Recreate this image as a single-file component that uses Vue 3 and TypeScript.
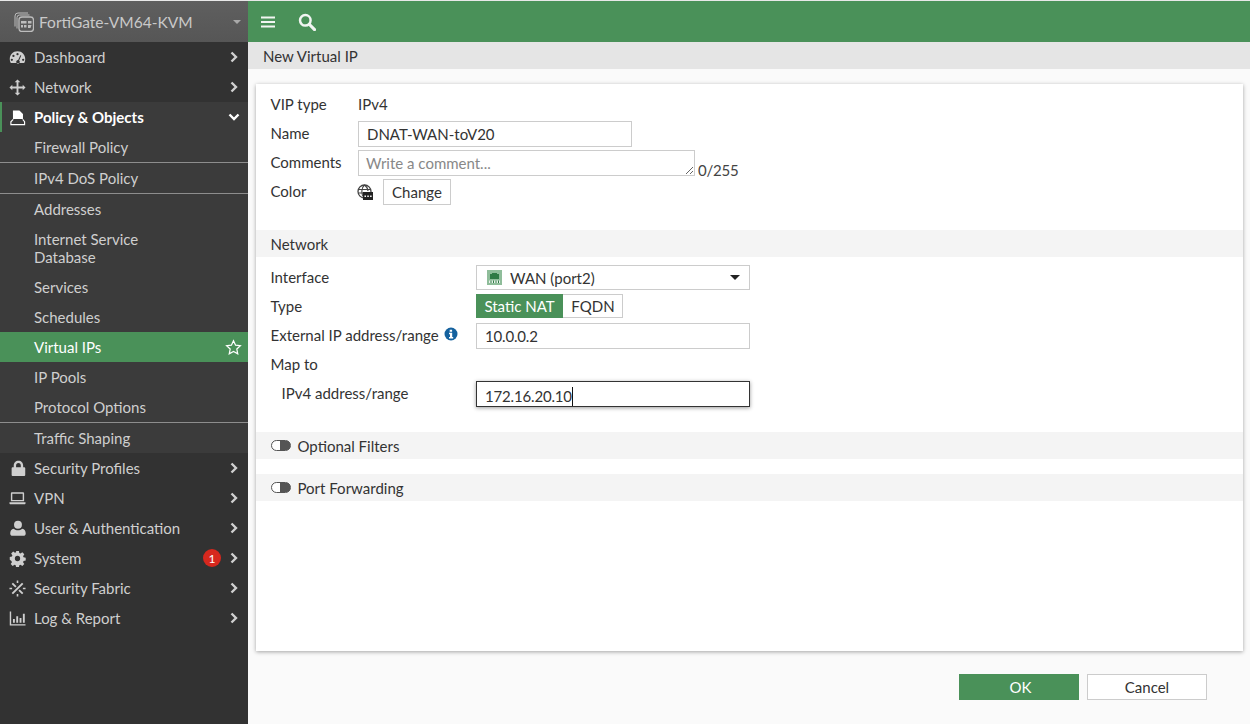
<script setup lang="ts">
interface MenuItem {
  label: string
  icon?: string
  kind: 'top' | 'sub'
  open?: boolean
  current?: boolean
  rule?: boolean
  badge?: number
  lines?: string[]
}

const menu: MenuItem[] = [
  { label: 'Dashboard', icon: 'gauge', kind: 'top' },
  { label: 'Network', icon: 'move', kind: 'top' },
  { label: 'Policy & Objects', icon: 'policy', kind: 'top', open: true },
  { label: 'Firewall Policy', kind: 'sub', rule: true },
  { label: 'IPv4 DoS Policy', kind: 'sub', rule: true },
  { label: 'Addresses', kind: 'sub' },
  { label: 'Internet Service Database', kind: 'sub', lines: ['Internet Service', 'Database'] },
  { label: 'Services', kind: 'sub' },
  { label: 'Schedules', kind: 'sub' },
  { label: 'Virtual IPs', kind: 'sub', current: true },
  { label: 'IP Pools', kind: 'sub' },
  { label: 'Protocol Options', kind: 'sub', rule: true },
  { label: 'Traffic Shaping', kind: 'sub' },
  { label: 'Security Profiles', icon: 'lock', kind: 'top' },
  { label: 'VPN', icon: 'laptop', kind: 'top' },
  { label: 'User & Authentication', icon: 'user', kind: 'top' },
  { label: 'System', icon: 'cog', kind: 'top', badge: 1 },
  { label: 'Security Fabric', icon: 'fabric', kind: 'top' },
  { label: 'Log & Report', icon: 'chart', kind: 'top' }
]
</script>

<template>
  <div class="page">
    <aside class="sidebar">
      <div class="device">
        <svg class="device-icon" viewBox="0 0 20 20" fill="none" stroke="#bdbdbd">
          <path d="M1 14.500V4a3 3 0 0 1 3-3h10" stroke-width="1" />
          <path d="M3 16.500V5.500a2.500 2.500 0 0 1 2.500-2.500h10" stroke-width="1" />
          <rect x="5" y="5" width="14.500" height="14.500" rx="3" stroke-width="1.300" />
          <path d="M7 9h5.500v2.500H7zM7 13h2v2.500H7zM10 13h2.500v2.500H10zM14 9h3.500v2.500H14zM14 13h3.500l-1 3H14z" fill="#bdbdbd" stroke="none" />
        </svg>
        <span class="device-name">FortiGate-VM64-KVM</span>
        <span class="device-caret"></span>
      </div>
      <nav>
        <template v-for="item in menu" :key="item.label">
          <div
            class="item"
            :class="[item.kind, { open: item.open, current: item.current, tall: item.lines }]"
          >
            <span v-if="item.kind === 'top'" class="item-icon">
              <svg v-if="item.icon === 'gauge'" viewBox="0 0 18 18" fill="#cfcfcf">
                <path fill-rule="evenodd" d="M9 2.500C4.300 2.500.8 6.200.8 10.800c0 1.500.4 2.800 1.100 4h14.200c.7-1.200 1.100-2.500 1.100-4C17.200 6.200 13.700 2.500 9 2.500zM9 4.300a1.200 1.200 0 1 1 0 2.400 1.200 1.200 0 0 1 0-2.400zM4.700 6.100a1.200 1.200 0 1 1 0 2.400 1.200 1.200 0 0 1 0-2.400zM3 10.200a1.200 1.200 0 1 1 0 2.400 1.200 1.200 0 0 1 0-2.400zM15 10.200a1.200 1.200 0 1 1 0 2.400 1.200 1.200 0 0 1 0-2.400zM12 6.500l1 .4-2.300 5.200a1.900 1.900 0 1 1-1-.4z" />
              </svg>
              <svg v-else-if="item.icon === 'move'" viewBox="0 0 18 18" fill="#cfcfcf">
                <path d="M9 .5l3 3h-2v4.500h4.500v-2l3 3-3 3v-2H10v4.500h2l-3 3-3-3h2V10H3.500v2l-3-3 3-3v2H8V3.500H6z" />
              </svg>
              <svg v-else-if="item.icon === 'policy'" viewBox="0 0 18 18">
                <path d="M4.200 1.500h6.800l3.800 3.800v5.200H4.200z" fill="#fff" />
                <path d="M4.500 11L2 13.500v3h14.500v-3L14.500 11" fill="none" stroke="#fff" stroke-width="1.200" />
              </svg>
              <svg v-else-if="item.icon === 'lock'" viewBox="0 0 18 18" fill="#cfcfcf">
                <path fill-rule="evenodd" d="M10 .8C7 .8 5 3 5 6v1.800H3.800c-.6 0-1 .4-1 1V16c0 .6.4 1 1 1h12.400c.6 0 1-.4 1-1V8.800c0-.6-.4-1-1-1H15V6c0-3-2-5.200-5-5.200zM10 3.200c1.600 0 2.500 1.200 2.500 2.800v1.800h-5V6c0-1.600.9-2.800 2.500-2.800z" />
              </svg>
              <svg v-else-if="item.icon === 'laptop'" viewBox="0 0 18 18" fill="#cfcfcf">
                <path fill-rule="evenodd" d="M3 2.500h12c.6 0 1 .4 1 1V12H2V3.500c0-.6.4-1 1-1zM3.500 4v6.500h11V4zM.5 13h17v1c0 .6-.5 1-1 1h-15c-.5 0-1-.4-1-1z" />
              </svg>
              <svg v-else-if="item.icon === 'user'" viewBox="0 0 18 18" fill="#cfcfcf">
                <circle cx="9.500" cy="5" r="4.200" />
                <path d="M5 9.200c1.500 1.200 2.900 1.600 4.500 1.600s3-.4 4.500-1.600c2.500.3 3.700 2.300 3.700 5 0 1.700-1 2.600-2.500 2.600H3.800c-1.500 0-2.500-.9-2.500-2.600 0-2.700 1.200-4.700 3.700-5z" />
              </svg>
              <svg v-else-if="item.icon === 'cog'" viewBox="0 0 18 18" fill="#cfcfcf">
                <path fill-rule="evenodd" d="M7.500 1h3l.4 2.300 1.300.5 1.900-1.300 2.100 2.100-1.300 1.900.5 1.300 2.300.4v3l-2.300.4-.5 1.300 1.300 1.900-2.100 2.100-1.900-1.300-1.300.5-.4 2.300h-3l-.4-2.300-1.300-.5-1.900 1.300-2.100-2.100 1.300-1.900-.5-1.300L.8 10.400v-3l2.300-.4.5-1.300-1.300-1.900 2.100-2.100 1.900 1.300 1.300-.5zM9 6.200a2.800 2.800 0 1 0 0 5.600 2.800 2.800 0 0 0 0-5.600z" />
              </svg>
              <svg v-else-if="item.icon === 'fabric'" viewBox="0 0 18 18" fill="none" stroke="#cfcfcf" stroke-width="2">
                <path d="M3.500 3.500l3.800 3.800M10.700 10.700l3.800 3.800M14.500 3.500l-11 11" />
                <path d="M9 .5v2.800M9 14.700v2.800M.5 9h2.800M14.700 9h2.800" stroke-width="1.700" />
              </svg>
              <svg v-else viewBox="0 0 18 18" fill="#cfcfcf">
                <path d="M.8 1.500h1.500V15h15.200v1.500H.8zM4.200 9.500h2V13.500h-2zM7.700 6.500h2V13.500h-2zM11.200 8.500h2V13.500h-2zM14.700 4h2V13.500h-2z" />
              </svg>
            </span>
            <span class="item-label">
              <template v-if="item.lines">
                <span v-for="line in item.lines" :key="line" class="item-line">{{ line }}</span>
              </template>
              <template v-else>{{ item.label }}</template>
            </span>
            <span v-if="item.badge" class="badge">{{ item.badge }}</span>
            <svg v-if="item.kind === 'top' && !item.open" class="chevron" viewBox="0 0 10 12" fill="none" stroke="#d0d0d0" stroke-width="2.400">
              <path d="M2.500 1.500L7 6l-4.500 4.500" />
            </svg>
            <svg v-if="item.open" class="chevron-down" viewBox="0 0 12 10" fill="none" stroke="#fff" stroke-width="2.400">
              <path d="M1.500 2.500L6 7l4.500-4.500" />
            </svg>
            <svg v-if="item.current" class="star" viewBox="0 0 18 18" fill="none" stroke="#fff" stroke-width="1.300">
              <path d="M9 1.800l2.200 4.700 5.100.6-3.800 3.500 1 5.100L9 13.200l-4.500 2.500 1-5.100L1.700 7.100l5.100-.6z" />
            </svg>
          </div>
          <div v-if="item.rule" class="rule"></div>
        </template>
      </nav>
    </aside>

    <main class="main">
      <header class="topbar">
        <svg class="top-icon" viewBox="0 0 16 16" fill="#f1f5f2">
          <path d="M1 2.500h14v2H1zM1 7h14v2H1zM1 11.500h14v2H1z" />
        </svg>
        <svg class="top-icon search" viewBox="0 0 16 16" fill="none" stroke="#f1f5f2">
          <circle cx="6.500" cy="6.500" r="4.700" stroke-width="2.200" />
          <path d="M10 10l4.700 4.700" stroke-width="2.800" stroke-linecap="round" />
        </svg>
      </header>
      <div class="title">New Virtual IP</div>

      <div class="content">
        <section class="card">
          <div class="form top-form">
            <div class="row vip">
              <label>VIP type</label>
              <span>IPv4</span>
            </div>
            <div class="row name">
              <label>Name</label>
              <input class="field" type="text" value="DNAT-WAN-toV20" readonly />
            </div>
            <div class="row comments">
              <label>Comments</label>
              <textarea class="field area" placeholder="Write a comment..." readonly></textarea>
              <span class="count">0/255</span>
            </div>
            <div class="row color">
              <label>Color</label>
              <svg class="color-icon" viewBox="0 0 16 16">
                <circle cx="7.500" cy="7.500" r="6.500" fill="#fff" stroke="#444" stroke-width="1.300" />
                <path d="M1.500 5.500h12M1.500 9h5M7.500 1C4 4 4 10 7 14M7.500 1C10 3 11 5 11 7" fill="none" stroke="#444" stroke-width="1.100" />
                <rect x="6" y="8" width="10" height="8" fill="#222" />
                <path d="M7.500 11.500h1.500V13H7.500zM10.300 11.500h1.500V13h-1.500zM13.100 11.500h1.500V13h-1.500z" fill="#fff" />
              </svg>
              <button class="change" type="button">Change</button>
            </div>
          </div>

          <div class="band network">Network</div>

          <div class="form net-form">
            <div class="row iface">
              <label>Interface</label>
              <div class="select">
                <svg class="port" viewBox="0 0 15 15">
                  <rect width="15" height="15" fill="#8fbd9a" />
                  <path d="M3 4h2V3h5v1h2v5H3z" fill="#2f7a45" />
                  <path d="M2 10.500h11V13H2z" fill="#e8f2ea" />
                  <path d="M3.500 10.500h1V13h-1zM6 10.500h1V13H6zM8.500 10.500h1V13h-1zM11 10.500h1V13h-1z" fill="#2f7a45" />
                </svg>
                <span class="select-text">WAN (port2)</span>
                <span class="select-caret"></span>
              </div>
            </div>
            <div class="row type">
              <label>Type</label>
              <div class="toggle">
                <span class="toggle-on">Static NAT</span>
                <span class="toggle-off">FQDN</span>
              </div>
            </div>
            <div class="row external">
              <label class="with-info">External IP address/range
                <svg class="info" viewBox="0 0 14 14">
                  <circle cx="7" cy="7" r="6.500" fill="#14619e" />
                  <path d="M5.700 2.700h2.400v2H5.700zM5 5.700h3.200v4.200h1v1.500H5V9.900h1V7.200H5z" fill="#fff" />
                </svg>
              </label>
              <input class="field wide digits" type="text" value="10.0.0.2" readonly />
            </div>
            <div class="row map">
              <label>Map to</label>
            </div>
            <div class="row ipv4">
              <label>IPv4 address/range</label>
              <div class="field wide focused digits"><span class="caret-text">172.16.20.10</span></div>
            </div>
          </div>

          <div class="band switch-band filters">
            <span class="switch"></span>Optional Filters
          </div>
          <div class="band switch-band forwarding">
            <span class="switch"></span>Port Forwarding
          </div>
        </section>

        <footer class="actions">
          <button class="btn ok" type="button">OK</button>
          <button class="btn cancel" type="button">Cancel</button>
        </footer>
      </div>
    </main>
  </div>
</template>

<style>
html,
body {
  margin: 0;
  padding: 0;
  overflow: hidden;
}
</style>

<style scoped>
* {
  box-sizing: border-box;
}

.page {
  display: flex;
  width: 1250px;
  height: 724px;
  font-family: Lato, "Liberation Sans", sans-serif;
  font-size: 15px;
  color: #333;
  background: #fafafa;
  overflow: hidden;
}

.sidebar {
  width: 248px;
  flex: none;
  background: #323232;
  color: #cfcfcf;
}

.device {
  display: flex;
  align-items: center;
  height: 42px;
  padding: 0 7px 0 14px;
  border-top: 1px solid #e8e8e8;
  background: linear-gradient(#5f5f5f, #565656);
}

.device-icon {
  width: 20px;
  height: 20px;
  margin-right: 5px;
}

.device-name {
  flex: 1;
  font-size: 15.500px;
  color: #c9c9c9;
}

.device-caret {
  width: 0;
  height: 0;
  border: 4px solid transparent;
  border-top: 4px solid #a9a9a9;
  border-bottom: 0;
}

.item {
  display: flex;
  align-items: center;
  min-height: 30px;
  padding-right: 9px;
}

.item.sub {
  padding-left: 34px;
  background: #3b3b3b;
}

.item.tall {
  min-height: 48px;
}

.item.top {
  padding-left: 9px;
}

.item.open {
  background: #3b3b3b;
  border-left: 2px solid #4a9159;
  padding-left: 7px;
  color: #fff;
  font-weight: 700;
}

.item.current {
  background: #4a9159;
  color: #fff;
  padding-right: 6px;
}

.item-icon {
  display: flex;
  width: 17px;
  margin-right: 8px;
}

.item-icon svg {
  width: 17px;
  height: 17px;
}

.item-label {
  flex: 1;
  line-height: 18px;
}

.item-line {
  display: block;
}

.badge {
  display: flex;
  align-items: center;
  justify-content: center;
  width: 18px;
  height: 18px;
  margin-right: 8px;
  border-radius: 50%;
  background: #d6281e;
  color: #fff;
  font-size: 12px;
}

.chevron {
  width: 10px;
  height: 12px;
}

.chevron-down {
  width: 12px;
  height: 10px;
  margin-right: -1px;
}

.star {
  width: 17px;
  height: 17px;
}

.rule {
  height: 1px;
  background: #8d8d8d;
}

.main {
  flex: 1;
  display: flex;
  flex-direction: column;
  min-width: 0;
}

.topbar {
  display: flex;
  align-items: center;
  gap: 22px;
  height: 42px;
  padding-left: 12px;
  border-top: 1px solid #e8e8e8;
  background: #4a9159;
}

.top-icon {
  width: 16px;
  height: 16px;
}

.search {
  width: 18px;
  height: 18px;
}

.title {
  height: 27px;
  padding: 1px 0 0 15px;
  line-height: 27px;
  background: #e5e5e5;
  color: #333;
}

.content {
  flex: 1;
  padding: 15px 7px 0 8px;
}

.card {
  height: 567px;
  padding-top: 9px;
  background: #fff;
  box-shadow: 0 1px 4px rgba(0, 0, 0, 0.35);
}

.form {
  padding-left: 15px;
}

.row {
  display: flex;
  align-items: center;
}

.row label {
  flex: none;
  margin: -2px 0 0 -0.5px;
}

.top-form label {
  width: 87.500px;
}

.net-form label {
  width: 205.500px;
}

.vip {
  height: 22px;
}

.vip label {
  margin-top: 0;
}

.name {
  height: 26px;
  margin-top: 6px;
}

.comments {
  height: 26px;
  margin-top: 3px;
}

.color {
  height: 26px;
  margin-top: 3px;
}

.field {
  display: block;
  height: 26px;
  padding: 0 8px;
  border: 1px solid #ccc;
  border-radius: 0;
  background: #fff;
  color: #333;
  font: inherit;
  outline: none;
}

.name .field {
  width: 274px;
}

.area {
  width: 337px;
  padding: 3px 7px 0;
  line-height: 18px;
  resize: both;
  overflow: hidden;
}

.area::placeholder {
  color: #888;
  opacity: 1;
}

.count {
  margin: 13px 0 0 3px;
  color: #444;
  letter-spacing: -0.2px;
}

.color-icon {
  width: 16px;
  height: 16px;
  margin: 0 10px 0 -1px;
}

.change {
  width: 68px;
  height: 26px;
  padding: 0;
  border: 1px solid #ccc;
  background: #fff;
  color: #333;
  font: inherit;
}

.band {
  display: flex;
  align-items: center;
  height: 27px;
  padding-left: 14.500px;
  background: #f4f4f4;
}

.network {
  margin-top: 25px;
}

.net-form {
  padding-top: 8px;
}

.iface {
  height: 25px;
}

.select {
  display: flex;
  align-items: center;
  width: 274px;
  height: 25px;
  padding: 0 9px 0 10px;
  border: 1px solid #ccc;
}

.port {
  width: 15px;
  height: 15px;
  margin-right: 8px;
}

.select-text {
  flex: 1;
}

.select-caret {
  width: 0;
  height: 0;
  border: 5px solid transparent;
  border-top: 5px solid #222;
  border-bottom: 0;
}

.type {
  height: 24px;
  margin-top: 4px;
}

.type label {
  margin-top: 0;
}

.toggle {
  display: flex;
  height: 24px;
}

.toggle-on {
  width: 87px;
  line-height: 24px;
  text-align: center;
  background: #4a9159;
  color: #fff;
}

.toggle-off {
  width: 60px;
  padding-left: 1px;
  line-height: 22px;
  text-align: center;
  border: 1px solid #ccc;
  border-left: 0;
}

.external {
  height: 26px;
  margin-top: 5px;
}

.with-info {
  display: flex;
  align-items: center;
  gap: 5px;
}

.info {
  width: 14px;
  height: 14px;
  margin-top: -2px;
}

.wide {
  width: 274px;
}

.digits {
  letter-spacing: -0.17px;
}

.map {
  height: 20px;
  margin-top: 6px;
}

.ipv4 {
  height: 26px;
  margin-top: 6px;
  padding-left: 11px;
}

.ipv4 label {
  width: 194.500px;
}

.focused {
  line-height: 24px;
  border-color: #333;
  box-shadow: 0 1px 4px rgba(0, 0, 0, 0.4);
}

.caret-text {
  display: inline-block;
  height: 19px;
  line-height: 19px;
  vertical-align: middle;
  border-right: 1px solid #111;
}

.switch-band {
  gap: 7px;
}

.filters {
  margin-top: 25px;
}

.forwarding {
  margin-top: 15px;
}

.switch {
  width: 20px;
  height: 11px;
  border: 1px solid #555;
  border-radius: 6px;
  background: linear-gradient(90deg, #fff 45%, #555 45%);
}

.actions {
  display: flex;
  gap: 8px;
  padding: 23px 36px 0 0;
  justify-content: flex-end;
}

.btn {
  width: 120px;
  height: 26px;
  padding: 0;
  font: inherit;
}

.ok {
  padding-left: 3px;
  border: 0;
  background: #4a9159;
  color: #fff;
}

.cancel {
  border: 1px solid #ccc;
  background: #fff;
  color: #333;
}
</style>
